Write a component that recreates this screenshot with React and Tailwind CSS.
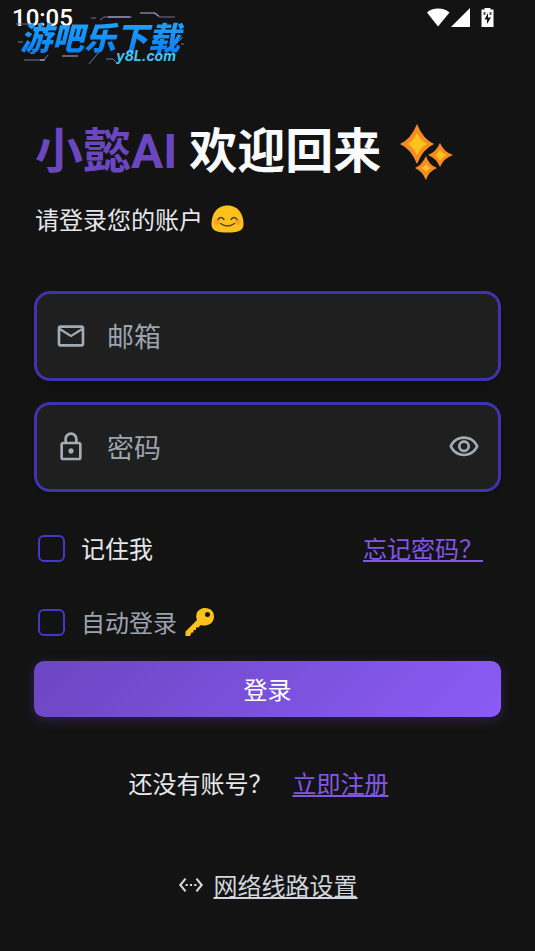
import { useState } from "react";
import {
  MdOutlineEmail,
  MdOutlineLock,
  MdOutlineVisibility,
  MdOutlineVisibilityOff,
  MdSettingsEthernet,
} from "react-icons/md";

const StatusBar = () => (
  <div className="flex flex-row items-start justify-between h-9 pt-1 pl-3 pr-10 text-white font-[Roboto,sans-serif]">
    <div className="text-2xl leading-7 font-medium">10:05</div>
    <div className="flex flex-row items-start pt-1">
      <svg className="w-6 h-5" viewBox="0 0 24 20" fill="currentColor" aria-hidden="true">
        <path d="M1 4.500C6-1 18-1 23.500 4.500L12 18.500Z" />
      </svg>
      <svg className="ml-px w-5 h-5" viewBox="0 0 20 20" fill="currentColor" aria-hidden="true">
        <path d="M0 19 19 0V19Z" />
      </svg>
      <svg className="ml-2 w-4 h-5" viewBox="0 0 16 20" aria-hidden="true">
        <path d="M5.500 0h6v1.500h3V19h-12V1.500h3Z" fill="currentColor" />
        <path d="M9 5 5.500 11.500h2.500V16L12 9.500H9Z" fill="#131313" />
        <path d="M4.500 4h2v3h-2ZM10.500 4h2v3h-2Z" fill="#555" />
      </svg>
    </div>
  </div>
);

const Watermark = () => (
  <div className="absolute left-4 top-3 w-44 h-14">
    <svg className="absolute inset-0 w-full h-full" viewBox="0 0 176 56" fill="none" strokeWidth="1" aria-hidden="true">
      <path d="M0 12h14M84 8l4-3h28M75 6h5M138 1l5 4h16M2 30h5M158 34l9-9M165 32h3M8 48h20l4-5M73 52l10-12M90 47h7l4 4" stroke="#77739c" />
      <path d="M92 5h22M124 1h15l4 3M24 48h5M46 44h16M14 41h5" stroke="#b5b1db" />
    </svg>
    <div className="absolute left-1 top-1 pr-2 whitespace-nowrap text-[32px] leading-10 font-black italic bg-linear-to-b from-[#25a9ff] to-[#087cf5] bg-clip-text text-transparent">
      游吧乐下载
    </div>
    <div className="absolute right-4 bottom-1 text-sm leading-4 font-bold italic text-[#43c6f6] font-[Inter,sans-serif]">
      y8L.com
    </div>
  </div>
);

const Sparkles = () => (
  <svg className="w-14 h-14" viewBox="0 0 56 56" fill="#f68b24" aria-hidden="true">
    <path d="M18 0Q24 15 35 20Q24 25 18 40Q12 25 1 20Q12 15 18 0Z" />
    <path d="M41 19Q45 28 54 31Q45 34 41 43Q37 34 29 31Q37 28 41 19Z" />
    <path d="M27 32Q30 41 38 44Q30 47 27 56Q23 47 16 44Q23 41 27 32Z" />
    <g fill="#fdc21c">
      <path d="M18 9Q22 17 28 20Q22 23 18 31Q14 23 9 20Q14 17 18 9Z" />
      <path d="M41 25Q43 30 48 31Q43 33 41 37Q39 33 36 31Q39 30 41 25Z" />
      <path d="M27 39Q28 43 32 44Q28 45 27 49Q26 45 22 44Q26 43 27 39Z" />
    </g>
  </svg>
);

const Smile = () => (
  <svg className="w-[33px] h-7" viewBox="0 0 33 28" fill="none" aria-hidden="true">
    <path d="M16.500.5C28 .5 32.500 10 32.500 19.500C32.500 26 26 27.500 16.500 27.500S.5 26 .5 19.500C.5 10 5 .5 16.500.5Z" fill="#fcc21b" />
    <circle cx="6" cy="17" r="3" fill="#fba22b" />
    <circle cx="27" cy="17" r="3" fill="#fba22b" />
    <path d="M7 14.500Q10 10.500 13 14.500M20 14.500Q23 10.500 26 14.500M9.500 18.500Q16.500 23.500 23.500 18.500" stroke="#4f3f2d" strokeWidth="1.400" strokeLinecap="round" />
  </svg>
);

const Key = () => (
  <svg className="w-[30px] h-7" viewBox="0 0 30 28" fill="#fcc21b" aria-hidden="true">
    <path fillRule="evenodd" d="M20 0C25.500 0 29 3.500 29 8.500S25 17.500 20 17.500Q17.500 17.500 15.500 17L13.500 19.500H11V22H8.500V24.500H6.500L5 28H.5V23.500L12 12Q10.500 9 11.500 6C12.500 2.500 16 0 20 0ZM22.500 4A2.500 2.500 0 1 0 22.500 9A2.500 2.500 0 1 0 22.500 4Z" />
  </svg>
);

const fieldClass =
  "flex flex-row items-center h-[90px] px-[18px] rounded-2xl border-[3px] border-[#3e34ae] bg-[#1f1f1f] text-[#a3abb5] shadow-md";
const inputClass =
  "flex-1 min-w-0 bg-transparent text-[27px] leading-10 text-gray-200 placeholder:text-[#9ca3af] outline-none";
const checkboxClass =
  "appearance-none w-[27px] h-[27px] rounded-md border-2 border-[#4338ca] checked:bg-[#4338ca]";

const App = () => {
  const [email, setEmail] = useState("");
  const [password, setPassword] = useState("");
  const [showPassword, setShowPassword] = useState(false);
  const [remember, setRemember] = useState(false);
  const [autoLogin, setAutoLogin] = useState(false);

  return (
    <div className="relative min-h-screen bg-[#131313] text-2xl text-gray-200 font-['Noto_Sans_CJK_SC',sans-serif]" lang="zh-CN">
      <StatusBar />
      <Watermark />

      <main className="pt-20 px-[34px] pb-10">
        <h1 className="flex flex-row items-center gap-[18px] h-[71px] pl-px text-5xl font-bold whitespace-nowrap text-gray-50 font-[Roboto,'Noto_Sans_CJK_SC',sans-serif]">
          <span><span className="text-[#6b46c1]">小懿AI</span> 欢迎回来</span>
          <Sparkles />
        </h1>
        <p className="flex flex-row items-center gap-2 mt-3 h-10 pl-px">
          请登录您的账户
          <Smile />
        </p>

        <form onSubmit={(e) => e.preventDefault()}>
          <div className="flex flex-col gap-[21px] mt-[52px]">
            <div className={fieldClass}>
              <MdOutlineEmail className="mr-5 w-8 h-8" />
              <input
                className={inputClass}
                type="email"
                aria-label="邮箱"
                placeholder="邮箱"
                value={email}
                onChange={(e) => setEmail(e.target.value)}
              />
            </div>
            <div className={fieldClass}>
              <MdOutlineLock className="mr-5 w-8 h-8" />
              <input
                className={inputClass}
                type={showPassword ? "text" : "password"}
                aria-label="密码"
                placeholder="密码"
                value={password}
                onChange={(e) => setPassword(e.target.value)}
              />
              <button type="button" aria-label="显示密码" onClick={() => setShowPassword(!showPassword)}>
                {showPassword ? <MdOutlineVisibilityOff className="w-8 h-8" /> : <MdOutlineVisibility className="w-8 h-8" />}
              </button>
            </div>
          </div>

          <div className="flex flex-row items-center justify-between mt-9 h-10 pl-1 pr-[18px]">
            <label className="flex flex-row items-center gap-4">
              <input
                className={checkboxClass}
                type="checkbox"
                checked={remember}
                onChange={(e) => setRemember(e.target.checked)}
              />
              记住我
            </label>
            <a className="text-[#8257e5] underline" href="#forgot">忘记密码？</a>
          </div>
          <label className="flex flex-row items-center gap-4 mt-[34px] h-10 pl-1 text-[#9ca3af]">
            <input
              className={checkboxClass}
              type="checkbox"
              checked={autoLogin}
              onChange={(e) => setAutoLogin(e.target.checked)}
            />
            <span className="flex flex-row items-center gap-2">自动登录 <Key /></span>
          </label>

          <button
            className="mt-[19px] w-full h-14 rounded-[10px] bg-linear-[135deg] from-[#6b46c1] to-[#8b5cf6] text-white shadow-[0_3px_12px_rgba(107,70,193,0.3)]"
            type="submit"
          >
            登录
          </button>
        </form>

        <p className="flex flex-row items-center justify-center gap-5 mt-[46px] h-10 pr-[18px]">
          还没有账号？
          <a className="text-[#8257e5] underline" href="#register">立即注册</a>
        </p>
        <div className="flex flex-row justify-center mt-[62px]">
          <a className="flex flex-row items-center gap-2.5 h-10 text-gray-300" href="#network">
            <MdSettingsEthernet className="w-[26px] h-[26px]" />
            <span className="underline">网络线路设置</span>
          </a>
        </div>
      </main>
    </div>
  );
};

export default App;
